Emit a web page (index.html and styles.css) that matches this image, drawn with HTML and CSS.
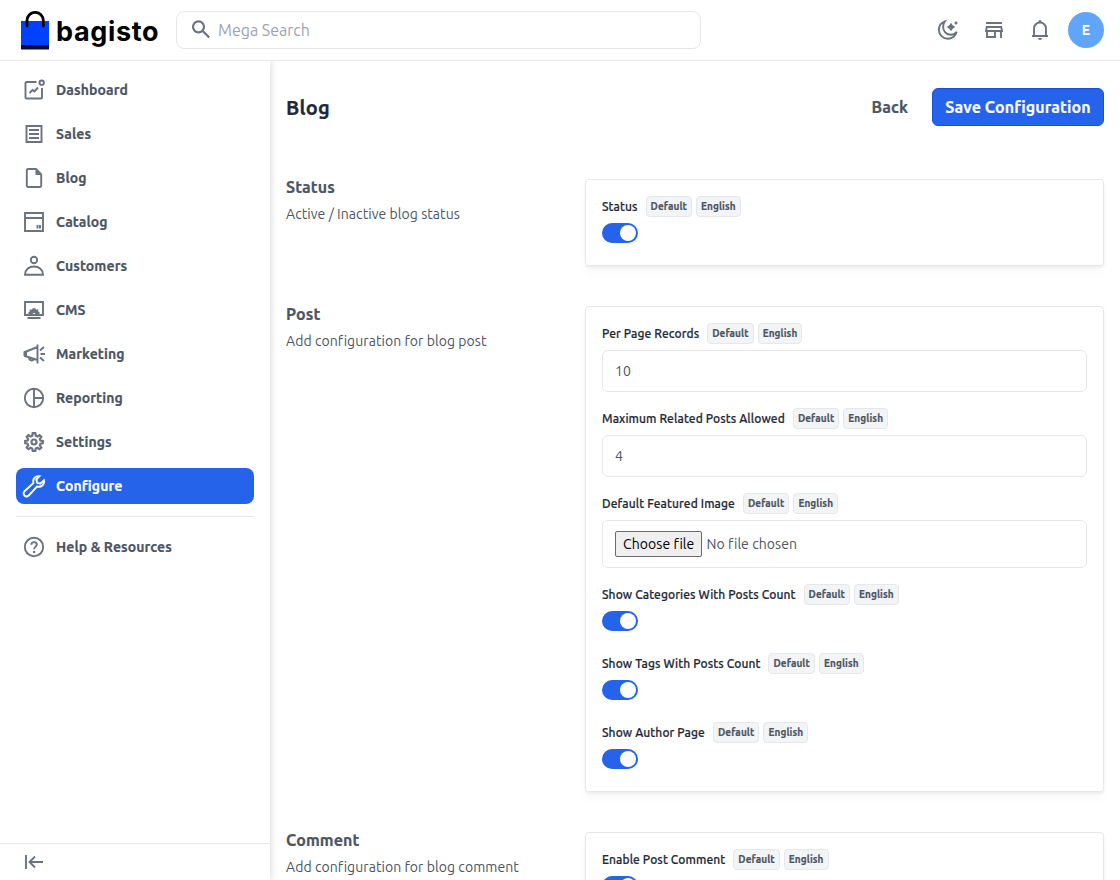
FILE: index.html
```
<!DOCTYPE html>
<html lang="en">

<head>
  <meta charset="UTF-8" />
  <meta name="viewport" content="width=device-width, initial-scale=1.0" />
  <title>Blog - Configure</title>
  <link rel="stylesheet" href="styles.css">
</head>

<body>
  <header class="topbar">
    <a class="logo">
      <svg width="28" height="39" viewBox="0 0 28 39">
        <path fill="#0041ff" d="M0 10h28v24H0z" />
        <path fill="#060c3b" d="M0 34h28v4.500H0z" />
        <path fill="none" stroke="#000" stroke-width="2.800" stroke-linecap="round" d="M6 15V9.500a8 8 0 0 1 16.300 0V15" />
      </svg>
      <span class="logo-text">bagisto</span>
    </a>
    <div class="search">
      <svg width="20" height="20" viewBox="0 0 20 20" fill="none" stroke="#6b7280" stroke-width="2.200">
        <circle cx="7.500" cy="6.800" r="5.500" />
        <path d="M11.500 10.800l6.700 6.700" />
      </svg>
      <span>Mega Search</span>
    </div>
    <div class="actions">
      <svg class="icon" viewBox="0 0 24 24">
        <path d="M9 3.300C5.300 4.500 2.900 7.800 2.900 11.800c0 5 4 9 9 9 4.300 0 7.900-3 8.800-7-1.500 1.900-3.500 2.900-5.900 2.900-4.300 0-7.700-3.400-7.700-7.600 0-2.300.7-4.200 1.900-5.800z" />
        <path class="fill" d="M15 4.700l1.700 2.600L19.300 9l-2.600 1.700L15 13.300l-1.700-2.600L10.700 9l2.600-1.700zM20 2.800l.8 1.400 1.400.8-1.400.8-.8 1.400-.8-1.400-1.400-.8 1.400-.8z" />
      </svg>
      <svg class="icon" viewBox="0 0 24 24">
        <path d="M4 5h16M4.800 9h14.400l.8 4H4zM5 13v6h8v-6M19 13v7" />
      </svg>
      <svg class="icon" viewBox="0 0 24 24">
        <path d="M4 18h16M6 18v-7.500a6 6 0 0 1 12 0V18" />
        <path class="fill" d="M10.500 4.500V3.500a1.500 1.500 0 0 1 3 0v1zM10 20h4a2 2 0 0 1-4 0z" />
      </svg>
      <span class="avatar">E</span>
    </div>
  </header>

  <div class="container">
    <aside class="sidebar">
      <nav class="menu">
        <a class="menu-item">
          <svg class="icon" viewBox="0 0 24 24">
            <path d="M14.500 4H4.500a1 1 0 0 0-1 1v14.500a1 1 0 0 0 1 1h14.500a1 1 0 0 0 1-1V10M7.500 15l3-3 2 1.500 3.500-4" />
            <circle cx="19.700" cy="4.700" r="2.200" />
          </svg>
          <span>Dashboard</span>
        </a>
        <a class="menu-item">
          <svg class="icon" viewBox="0 0 24 24">
            <path d="M4.500 4h15v16H4.500zM7 8h10M7 12h10M7 16h10" />
          </svg>
          <span>Sales</span>
        </a>
        <a class="menu-item">
          <svg class="icon" viewBox="0 0 24 24">
            <path d="M14 3H6a1.200 1.200 0 0 0-1.200 1.200v15.600A1.200 1.200 0 0 0 6 21h12a1.200 1.200 0 0 0 1.200-1.200V8.500z" />
            <path class="fill" d="M13.500 3v6H20z" />
          </svg>
          <span>Blog</span>
        </a>
        <a class="menu-item">
          <svg class="icon" viewBox="0 0 24 24">
            <path d="M3 3h18v18H3zM3 8h18M15.500 15v3.500M18 15v3.500" />
          </svg>
          <span>Catalog</span>
        </a>
        <a class="menu-item">
          <svg class="icon" viewBox="0 0 24 24">
            <circle cx="12" cy="6" r="3.200" />
            <path d="M3 20.700c0-5 3.800-8.200 9-8.200s9 3.200 9 8.200z" />
          </svg>
          <span>Customers</span>
        </a>
        <a class="menu-item">
          <svg class="icon" viewBox="0 0 24 24">
            <path d="M3 4h18v13H3zM5.500 20h13" />
            <path class="fill" d="M6.500 16v-2l1.500-.8-.5-1.400 1.400-.5 1 .7.7-1.700h2.800l.7 1.700 1-.7 1.400.5-.5 1.400 1.500.8v2h-4a1.600 1.600 0 0 0-3 0z" />
          </svg>
          <span>CMS</span>
        </a>
        <a class="menu-item">
          <svg class="icon" viewBox="0 0 24 24">
            <path d="M15.500 2.500v19M15.500 5L3 10v4l12.500 4M7 15.500c0 3 4 4 5 1.500M18 8.500l4-3.500M18.500 12H23M18 15.500l4 3.500" />
            <path class="fill" d="M1.500 9.500L5 8.700v6.200l-3.500-.8z" />
          </svg>
          <span>Marketing</span>
        </a>
        <a class="menu-item">
          <svg class="icon" viewBox="0 0 24 24">
            <circle cx="12" cy="12" r="9.200" />
            <path d="M12 3v18M12 12h9" />
          </svg>
          <span>Reporting</span>
        </a>
        <a class="menu-item">
          <svg class="icon gear" viewBox="0 0 24 24">
            <path d="M10.700 3.200h2.600l.5 2.600 1.600.7 2.200-1.400 1.700 1.700-1.500 2.200.7 1.600 2.300.4v2.200l-2.300.5-.7 1.600 1.500 2.200-1.700 1.700-2.200-1.400-1.600.7-.5 2.300h-2.600l-.5-2.300-1.600-.7-2.200 1.400-1.700-1.700 1.500-2.200-.7-1.600-2.300-.5V11l2.300-.4.700-1.600-1.500-2.200 1.700-1.700 2.200 1.400 1.600-.7z" />
            <circle cx="12" cy="12" r="2.500" />
          </svg>
          <span>Settings</span>
        </a>
        <a class="menu-item active">
          <svg class="icon" viewBox="0 0 24 24">
            <path d="M17.500 2.200c-4-.7-7.300 2.700-6 6.800l-9 8.300a2.700 2.700 0 0 0 4.200 4.200l8.300-9c4 1.300 7.900-2 6.900-6.200l-3.600 3.300-3.200-.8-.8-3.200z" />
          </svg>
          <span>Configure</span>
        </a>
      </nav>
      <div class="menu help">
        <a class="menu-item">
          <svg class="icon" viewBox="0 0 24 24">
            <circle cx="12" cy="12" r="9.200" />
            <path d="M9.300 9.800c0-3.600 5.500-3.400 5.500-.2 0 2-2.700 2.200-2.700 4.700" />
            <circle class="fill" cx="12.100" cy="17" r="1.200" />
          </svg>
          <span>Help &amp; Resources</span>
        </a>
      </div>
      <div class="collapse">
        <svg class="icon" viewBox="0 0 24 24">
          <path d="M4 5v14M21 12H8M13 6.500L7.500 12l5.500 5.500" />
        </svg>
      </div>
    </aside>

    <main class="content">
      <div class="page-head">
        <h1>Blog</h1>
        <div class="buttons">
          <a class="back">Back</a>
          <button class="save">Save Configuration</button>
        </div>
      </div>

      <section class="group">
        <div class="info">
          <h2>Status</h2>
          <p>Active / Inactive blog status</p>
        </div>
        <div class="card">
          <div class="field">
            <div class="label"><span>Status</span><b>Default</b><b>English</b></div>
            <div class="toggle"></div>
          </div>
        </div>
      </section>

      <section class="group">
        <div class="info">
          <h2>Post</h2>
          <p>Add configuration for blog post</p>
        </div>
        <div class="card">
          <div class="field">
            <div class="label"><span>Per Page Records</span><b>Default</b><b>English</b></div>
            <div class="input">10</div>
          </div>
          <div class="field">
            <div class="label"><span>Maximum Related Posts Allowed</span><b>Default</b><b>English</b></div>
            <div class="input">4</div>
          </div>
          <div class="field">
            <div class="label"><span>Default Featured Image</span><b>Default</b><b>English</b></div>
            <div class="input file"><span class="choose">Choose file</span><span>No file chosen</span></div>
          </div>
          <div class="field">
            <div class="label"><span>Show Categories With Posts Count</span><b>Default</b><b>English</b></div>
            <div class="toggle"></div>
          </div>
          <div class="field">
            <div class="label"><span>Show Tags With Posts Count</span><b>Default</b><b>English</b></div>
            <div class="toggle"></div>
          </div>
          <div class="field">
            <div class="label"><span>Show Author Page</span><b>Default</b><b>English</b></div>
            <div class="toggle"></div>
          </div>
        </div>
      </section>

      <section class="group">
        <div class="info">
          <h2>Comment</h2>
          <p>Add configuration for blog comment</p>
        </div>
        <div class="card">
          <div class="field">
            <div class="label"><span>Enable Post Comment</span><b>Default</b><b>English</b></div>
            <div class="toggle"></div>
          </div>
        </div>
      </section>
    </main>
  </div>
</body>

</html>
```
FILE: styles.css
```
* {
  box-sizing: border-box;
}

body {
  margin: 0;
  height: 100vh;
  display: flex;
  flex-direction: column;
  overflow: hidden;
  background-color: #fff;
  color: #4b5563;
  font-family: Ubuntu, 'Noto Sans', sans-serif;
  font-size: 14px;
}

h1,
h2,
p {
  margin: 0;
}

h1,
h2,
.menu-item span,
.back,
.save,
.label span,
.label b {
  -webkit-text-stroke: 0.2px currentColor;
}

.icon {
  width: 24px;
  height: 24px;
  flex: none;
  fill: none;
  stroke: #6b7280;
  stroke-width: 1.900;
}

.icon .fill {
  fill: #6b7280;
  stroke: none;
}

.gear {
  stroke-width: 2.200;
}

.topbar {
  flex: none;
  height: 61px;
  display: flex;
  align-items: center;
  padding: 0 16px 1px 21px;
  border-bottom: 1px solid #e5e7eb;
}

.logo {
  display: flex;
  align-items: center;
  gap: 7px;
  width: 155px;
  padding-top: 1px;
}

.logo-text {
  padding-top: 3px;
  color: #000;
  font-family: Inter, sans-serif;
  font-size: 27px;
  font-weight: 700;
  letter-spacing: 0.65px;
  line-height: 32px;
}

.search {
  width: 525px;
  height: 38px;
  display: flex;
  align-items: center;
  gap: 7px;
  padding-left: 14px;
  border: 1px solid #e5e7eb;
  border-radius: 8px;
  color: #9ca3af;
  font-size: 16px;
}

.actions {
  margin-left: auto;
  display: flex;
  align-items: center;
  gap: 22px;
}

.avatar {
  width: 36px;
  height: 36px;
  margin-left: -6px;
  border-radius: 50%;
  background-color: #60a5fa;
  color: #fff;
  font-size: 14px;
  font-weight: 700;
  line-height: 36px;
  text-align: center;
}

.container {
  flex: 1;
  min-height: 0;
  display: flex;
}

.sidebar {
  width: 270px;
  flex: none;
  display: flex;
  flex-direction: column;
  padding-top: 11px;
  box-shadow: 0 0 8px rgba(0, 0, 0, 0.18);
  clip-path: inset(0 -12px 0 0);
}

.menu {
  display: flex;
  flex-direction: column;
  gap: 8px;
  margin: 0 16px;
}

.menu-item {
  height: 36px;
  display: flex;
  align-items: center;
  gap: 10px;
  padding-left: 6px;
  border-radius: 8px;
  font-weight: 700;
  letter-spacing: 0.1px;
}

.menu-item.active {
  background-color: #2563eb;
  color: #fff;
}

.menu-item.active .icon {
  stroke: #fff;
}

.help {
  margin-top: 12px;
  padding-top: 12px;
  border-top: 1px solid #e5e7eb;
}

.collapse {
  height: 37px;
  margin-top: auto;
  padding: 6px 22px;
  border-top: 1px solid #e5e7eb;
}

.content {
  flex: 1;
  padding: 27px 16px 0;
}

.page-head {
  height: 38px;
  display: flex;
  align-items: center;
  justify-content: space-between;
  margin-bottom: 53px;
}

h1 {
  color: #1f2937;
  font-size: 20px;
  font-weight: 700;
  letter-spacing: 0.2px;
}

.buttons {
  display: flex;
  align-items: center;
  gap: 24px;
  font-size: 16px;
}

.back {
  font-weight: 700;
  letter-spacing: 0.1px;
}

.save {
  width: 172px;
  height: 38px;
  padding: 0;
  background-color: #2563eb;
  border: 1px solid #1d4ed8;
  border-radius: 6px;
  color: #f9fafb;
  font-family: inherit;
  font-size: 16px;
  font-weight: 700;
  letter-spacing: 0.1px;
  white-space: nowrap;
}

.group {
  display: grid;
  grid-template-columns: 299px 1fr;
  align-items: start;
  margin-bottom: 40px;
}

h2 {
  font-size: 16px;
  font-weight: 700;
  letter-spacing: 0.1px;
  line-height: 16px;
}

.info p {
  margin-top: 9px;
  letter-spacing: 0.06px;
  line-height: 21px;
}

.card {
  display: flex;
  flex-direction: column;
  gap: 16px;
  padding: 16px;
  border: 1px solid #e5e7eb;
  border-radius: 4px;
  box-shadow: 0 8px 10px rgba(0, 0, 0, 0.02), 0 2px 3px rgba(0, 0, 0, 0.06);
}

.label {
  height: 21px;
  display: flex;
  align-items: center;
  gap: 4px;
  margin-bottom: 6px;
  color: #1f2937;
  font-size: 12px;
  font-weight: 500;
}

.label span {
  margin-right: 4px;
  letter-spacing: 0.1px;
}

.label b {
  height: 21px;
  padding: 0 4px;
  background-color: #f3f4f6;
  border: 1px solid #e5e7eb;
  border-radius: 4px;
  color: #4b5563;
  font-size: 10px;
  font-weight: 700;
  letter-spacing: 0.1px;
  line-height: 19px;
}

.input {
  height: 42px;
  display: flex;
  align-items: center;
  padding: 0 12px;
  border: 1px solid #e5e7eb;
  border-radius: 6px;
}

.file {
  height: 48px;
  gap: 4px;
  letter-spacing: 0.07px;
}

.choose {
  height: 26px;
  padding: 0 7px;
  background-color: #efefef;
  border: 1px solid #6b6b6b;
  border-radius: 2px;
  color: #000;
  line-height: 24px;
}

.toggle {
  width: 36px;
  height: 20px;
  margin-bottom: 6px;
  padding: 2px;
  border-radius: 10px;
  background-color: #2563eb;
}

.toggle::after {
  content: "";
  display: block;
  width: 16px;
  height: 16px;
  margin-left: auto;
  border-radius: 50%;
  background-color: #fff;
}
```
